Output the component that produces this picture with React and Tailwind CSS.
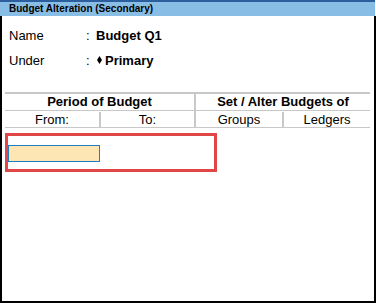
import React from "react";

const Diamond = () => (
    <svg width="5" height="8" viewBox="0 0 5 8" className="mr-[3px] mb-[2px]">
        <polygon points="2.5,0 5,4 2.5,8 0,4" fill="#000" />
    </svg>
);

export default function App() {
    return (
        <div className="w-[376px] h-[303px] flex flex-col bg-white text-black font-['Liberation_Sans',Arial,sans-serif]">
            {/* title band */}
            <div className="h-[16px] border-t-2 border-[#2c5e9e] bg-[#88bde6] pl-[9px] text-[10px] font-bold leading-[14px] w-[375px]">
                Budget Alteration (Secondary)
            </div>

            <div className="flex-1 border-l-2 border-r-2 border-b-2 border-black pt-[7px]">
                <div className="flex items-center h-[25px] pl-[7px] text-[13px]">
                    <span className="w-[77px]">Name</span>
                    <span className="w-[10px]">:</span>
                    <span className="font-bold">Budget Q1</span>
                </div>
                <div className="flex items-center h-[25px] pl-[7px] text-[13px]">
                    <span className="w-[77px]">Under</span>
                    <span className="w-[11px]">:</span>
                    <Diamond />
                    <span className="font-bold">Primary</span>
                </div>

                {/* period table */}
                <div className="mt-[19px] ml-[3px] mr-[4px] flex border-t-2 border-b border-[#c8c8c8] text-[13px] leading-[16px] text-center">
                    <div className="w-[189px] flex flex-col">
                        <div className="h-[16px] font-bold">Period of Budget</div>
                        <div className="flex h-[17px] border-t border-[#c8c8c8] pt-px">
                            <div className="w-[94px]">From:</div>
                            <div className="flex-1 border-l-2 border-[#c8c8c8]">To:</div>
                        </div>
                    </div>
                    <div className="flex-1 flex flex-col border-l-2 border-[#c8c8c8]">
                        <div className="h-[16px] font-bold">Set / Alter Budgets of</div>
                        <div className="flex h-[17px] border-t border-[#c8c8c8] pt-px">
                            <div className="w-[86px]">Groups</div>
                            <div className="flex-1 border-l-2 border-[#c8c8c8]">Ledgers</div>
                        </div>
                    </div>
                </div>

                {/* highlighted entry */}
                <div className="mt-[5px] ml-[3px] w-[212px] h-[39px] border-[3px] border-[#e04646] pt-[9px]">
                    <div className="w-[92px] h-[17px] bg-[#fde6b4] border border-[#1f7fc1]" />
                </div>
            </div>
        </div>
    );
}
